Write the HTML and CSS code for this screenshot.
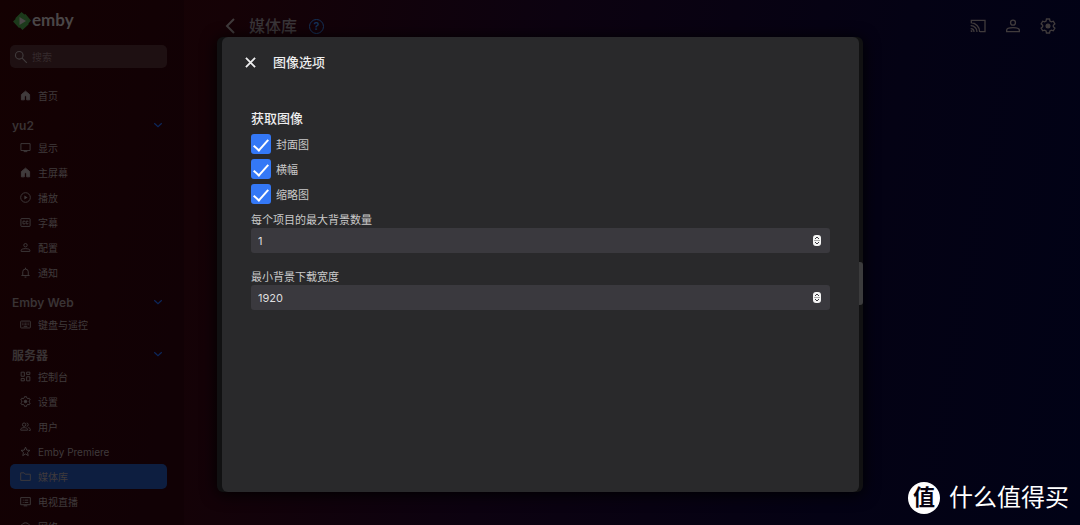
FILE: index.html
```html
<!DOCTYPE html>
<html lang="zh-CN">
<head>
<meta charset="utf-8">
<meta name="viewport" content="width=device-width, initial-scale=1">
<title>Emby</title>
<link rel="stylesheet" href="styles.css">
</head>
<body>
<svg class="defs" aria-hidden="true">
  <symbol id="i-home" viewBox="0 0 24 24"><path fill="currentColor" d="M12 2.500 3 10v11.500h6.500V15a2.500 2.500 0 0 1 5 0v6.500H21V10z"/></symbol>
  <symbol id="i-display" viewBox="0 0 24 24"><path d="M2 3.500h20v15H2zM8 21h8"/></symbol>
  <symbol id="i-play" viewBox="0 0 24 24"><circle cx="12" cy="12" r="10.500"/><path fill="currentColor" stroke="none" d="M9.500 7.500v9l7-4.500z"/></symbol>
  <symbol id="i-cc" viewBox="0 0 24 24"><rect x="2" y="3.500" width="20" height="17" rx="1"/><path d="M11 10.500V9H6.500v6H11v-1.500M17.500 10.500V9h-4v6h4v-1.500"/></symbol>
  <symbol id="i-person" viewBox="0 0 24 24"><circle cx="12" cy="7" r="3.700"/><path d="M2.500 20.500V18c0-2 4-3.500 9.500-3.500s9.500 1.500 9.500 3.500v2.500z"/></symbol>
  <symbol id="i-bell" viewBox="0 0 24 24"><path d="M6 18v-7.500a6 6 0 0 1 12 0V18M3 18.500h18M12 1.500v3M10 22h4"/></symbol>
  <symbol id="i-keyboard" viewBox="0 0 24 24"><rect x="1.500" y="4.500" width="21" height="15" rx="1"/><path d="M5 9h14M5 12.500h14" stroke-dasharray="2 1"/><path d="M8 16h8"/></symbol>
  <symbol id="i-dash" viewBox="0 0 24 24"><path d="M2.500 2.500h7v9h-7zM14.500 2.500h7v5h-7zM14.500 12.500h7v9h-7zM2.500 16.500h7v5h-7z"/></symbol>
  <symbol id="i-gear" viewBox="0 0 24 24"><path d="m9.700 1.500-.6 3-2.200 1.300L4 4.800 1.700 8.700 4 10.800v2.400l-2.300 2.100L4 19.200l2.900-1 2.200 1.300.6 3h4.600l.6-3 2.200-1.300 2.900 1 2.300-3.900-2.300-2.100v-2.400l2.300-2.100L20 4.800l-2.900 1-2.200-1.300-.6-3z"/><circle cx="12" cy="12" r="2.800" fill="currentColor"/></symbol>
  <symbol id="i-users" viewBox="0 0 24 24"><circle cx="9" cy="8" r="3.700"/><path d="M1.500 20v-2c0-2 3.500-3.500 7.500-3.500s7.500 1.500 7.500 3.500v2zM14.500 4.500a3.500 3.500 0 0 1 0 7M18 14.500c2 .6 4.500 1.500 4.500 3.500v2.500H19"/></symbol>
  <symbol id="i-star" viewBox="0 0 24 24"><path d="m12 2.500 2.700 6.500 7 .6-5.300 4.600 1.600 6.800-6-3.600L6 21l1.600-6.800-5.300-4.600 7-.6z"/></symbol>
  <symbol id="i-folder" viewBox="0 0 24 24"><path d="M1.500 4H9l2.500 3h11v13.500h-21z"/></symbol>
  <symbol id="i-tv" viewBox="0 0 24 24"><path d="M1.500 3.500h21V19h-21zM8 21.500h8M6 9h2M10 9h8M6 14h2M10 14h8"/></symbol>
  <symbol id="i-net" viewBox="0 0 24 24"><path d="M2 12c1-5 5.500-8 10-8s9 3 10 8M6 14c3-4 9-4 12 0"/></symbol>
  <symbol id="i-down" viewBox="0 0 24 24"><path d="m3 8 9 8 9-8"/></symbol>
  <symbol id="i-search" viewBox="0 0 24 24"><circle cx="9" cy="9" r="6.500"/><path d="m14 14 8 8"/></symbol>
  <symbol id="i-cast" viewBox="0 0 24 24"><path d="M2 7V3.500h20.500v17H15M1 11.500a9 9 0 0 1 9.500 9.500M1 7A13.500 13.500 0 0 1 14.500 21M1 16a5 5 0 0 1 5 5M1 19.500h1.500V21"/></symbol>
  <symbol id="i-spin" viewBox="0 0 8 11"><rect width="8" height="11" rx="3" fill="#f4f4f4" stroke="none"/><path fill="none" stroke="#3a393e" stroke-width="1" d="m2 4 2-2 2 2M2 7l2 2 2-2"/><path stroke="#aaa" stroke-width="1" d="M1 5.500h6"/></symbol>
</svg>

<div class="app">
  <aside class="sidebar">
    <a class="logo" href="#">
      <svg class="logo-mark" viewBox="0 0 18 18" aria-hidden="true"><path fill="#1c3a1b" d="m8.500 0 3 2.500 1-.5L18 8.500l-2.500 3v1L9.500 18 7 15.500l-1 .5-6-6.500L2.500 7V6z"/><path fill="#4a4747" d="M6.500 5v8l6.500-4z"/></svg>
      <span>emby</span>
    </a>
    <label class="search">
      <svg class="icon search-icon"><use href="#i-search"/></svg>
      <input type="text" placeholder="搜索" aria-label="搜索">
    </label>
    <nav class="nav">
      <a class="item" href="#"><svg class="icon"><use href="#i-home"/></svg>首页</a>
      <button class="group" type="button">yu2<svg class="icon chevron"><use href="#i-down"/></svg></button>
      <a class="item" href="#"><svg class="icon"><use href="#i-display"/></svg>显示</a>
      <a class="item" href="#"><svg class="icon"><use href="#i-home"/></svg>主屏幕</a>
      <a class="item" href="#"><svg class="icon"><use href="#i-play"/></svg>播放</a>
      <a class="item" href="#"><svg class="icon"><use href="#i-cc"/></svg>字幕</a>
      <a class="item" href="#"><svg class="icon"><use href="#i-person"/></svg>配置</a>
      <a class="item" href="#"><svg class="icon"><use href="#i-bell"/></svg>通知</a>
      <button class="group" type="button">Emby Web<svg class="icon chevron"><use href="#i-down"/></svg></button>
      <a class="item" href="#"><svg class="icon"><use href="#i-keyboard"/></svg>键盘与遥控</a>
      <button class="group" type="button">服务器<svg class="icon chevron"><use href="#i-down"/></svg></button>
      <a class="item" href="#"><svg class="icon"><use href="#i-dash"/></svg>控制台</a>
      <a class="item" href="#"><svg class="icon"><use href="#i-gear"/></svg>设置</a>
      <a class="item" href="#"><svg class="icon"><use href="#i-users"/></svg>用户</a>
      <a class="item" href="#"><svg class="icon"><use href="#i-star"/></svg>Emby Premiere</a>
      <a class="item selected" href="#" aria-current="page"><svg class="icon"><use href="#i-folder"/></svg>媒体库</a>
      <a class="item" href="#"><svg class="icon"><use href="#i-tv"/></svg>电视直播</a>
      <a class="item" href="#"><svg class="icon"><use href="#i-net"/></svg>网络</a>
    </nav>
  </aside>
  <header class="header">
    <button class="plain" type="button" aria-label="返回"><svg class="back" viewBox="0 0 10 16"><path d="M9 1 2 8l7 7"/></svg></button>
    <h1>媒体库</h1>
    <a class="help" href="#" aria-label="帮助">?</a>
    <div class="actions">
      <button class="plain" type="button" aria-label="投射"><svg class="icon large"><use href="#i-cast"/></svg></button>
      <button class="plain" type="button" aria-label="用户"><svg class="icon large"><use href="#i-person"/></svg></button>
      <button class="plain" type="button" aria-label="设置"><svg class="icon large"><use href="#i-gear"/></svg></button>
    </div>
  </header>
</div>

<div class="overlay">
  <div class="frame">
    <section class="dialog" role="dialog" aria-labelledby="dialog-title">
      <div class="dialog-head">
        <button class="plain" type="button" aria-label="关闭"><svg class="close" viewBox="0 0 12 12"><path d="m1 1 10 10M11 1 1 11"/></svg></button>
        <h2 id="dialog-title">图像选项</h2>
      </div>
      <form class="form">
        <fieldset>
          <legend>获取图像</legend>
          <label class="check"><input type="checkbox" checked>封面图</label>
          <label class="check"><input type="checkbox" checked>横幅</label>
          <label class="check"><input type="checkbox" checked>缩略图</label>
        </fieldset>
        <div class="field">
          <label for="max-backdrops">每个项目的最大背景数量</label>
          <div class="number"><input id="max-backdrops" type="number" value="1"><svg class="spin" aria-hidden="true"><use href="#i-spin"/></svg></div>
        </div>
        <div class="field">
          <label for="min-width">最小背景下载宽度</label>
          <div class="number"><input id="min-width" type="number" value="1920"><svg class="spin" aria-hidden="true"><use href="#i-spin"/></svg></div>
        </div>
      </form>
    </section>
    <span class="thumb"></span>
  </div>
</div>

<div class="watermark"><span class="seal">值</span><span>什么值得买</span></div>
</body>
</html>
```

FILE: styles.css
```css
* { box-sizing: border-box; }
body {
  margin: 0;
  height: 100vh;
  overflow: hidden;
  position: relative;
  font-family: Inter, "Noto Sans CJK SC", sans-serif;
  font-size: 10px;
  color: #403b3c;
  background: linear-gradient(100deg, #180203 0%, #150206 20%, #0c0210 48%, #040214 78%, #010216 100%);
}
button, input { font: inherit; color: inherit; }
a { color: inherit; text-decoration: none; }
h1, h2 { margin: 0; }
.defs { position: absolute; width: 0; height: 0; }

.icon {
  width: 11px;
  height: 11px;
  flex: none;
  fill: none;
  stroke: currentColor;
  stroke-width: 2;
}
.plain {
  display: flex;
  padding: 0;
  border: 0;
  background: none;
}

.app { display: flex; height: 100%; }
.sidebar {
  flex: none;
  width: 184px;
  padding: 10px 17px 0 10px;
  overflow: hidden;
  background: rgba(0, 0, 0, 0.15);
}
.logo {
  display: flex;
  align-items: center;
  gap: 1px;
  height: 22px;
  padding-left: 3px;
  font: 700 17px/20px Lato, sans-serif;
  color: #4a4647;
}
.logo span { padding-bottom: 3px; }
.logo-mark { width: 18px; height: 18px; }
.search {
  display: flex;
  align-items: center;
  gap: 4px;
  height: 23px;
  margin: 13px 0 15px;
  padding-left: 4px;
  border-radius: 5px;
  background: #1e1012;
}
.search-icon { width: 14px; height: 14px; }
.search input {
  flex: 1;
  min-width: 0;
  padding: 0;
  border: 0;
  background: none;
}
.search input::placeholder { color: #352a2c; }

.item {
  display: flex;
  align-items: center;
  gap: 7px;
  height: 25px;
  padding-left: 10px;
  border-radius: 5px;
}
.selected { background: #0d1e40; }
.group {
  display: flex;
  align-items: center;
  justify-content: space-between;
  width: 100%;
  height: 27px;
  padding: 7px 4px 0 2px;
  border: 0;
  background: none;
  font-size: 12px;
  font-weight: 600;
  color: #393334;
}
.chevron { width: 10px; height: 10px; stroke-width: 3; color: #0d275b; }

.header {
  flex: 1;
  display: flex;
  align-items: center;
  height: 52px;
  padding: 0 24px 0 41px;
}
.header h1 {
  margin: 0 12px 0 14px;
  font-size: 16px;
  line-height: 24px;
  font-weight: 500;
  color: #393538;
}
.back { width: 10px; height: 16px; fill: none; stroke: currentColor; stroke-width: 2; }
.help {
  width: 15px;
  height: 15px;
  border: 1px solid #143259;
  border-radius: 50%;
  font-size: 11px;
  line-height: 13px;
  font-weight: 600;
  text-align: center;
  color: #143259;
}
.actions { display: flex; gap: 19px; margin-left: auto; }
.large { width: 16px; height: 16px; }

.overlay {
  position: absolute;
  inset: 0;
  display: flex;
  justify-content: center;
  padding: 37px 20px 33px;
}
.frame {
  position: relative;
  width: 100%;
  max-width: 646px;
  padding: 0 4px 0 5px;
  border-radius: 6px;
  background: #111112;
  box-shadow: 0 2px 16px #000;
}
.dialog {
  height: 100%;
  overflow: auto;
  border-radius: 6px;
  background: #29292b;
  color: #c9c9ca;
}
.dialog-head {
  display: flex;
  align-items: center;
  gap: 17px;
  height: 50px;
  padding-left: 23px;
  color: #ededee;
}
.close { width: 11px; height: 11px; fill: none; stroke: currentColor; stroke-width: 2; }
.dialog-head h2, legend {
  font-size: 13px;
  line-height: 20px;
  font-weight: 500;
  color: #ededee;
}
.form { padding: 21px 29px 0; font-size: 11px; }
fieldset { margin: 0; padding: 0; border: 0; }
legend { padding: 0; margin-bottom: 3px; }
.check {
  display: flex;
  align-items: center;
  gap: 5px;
  height: 25px;
}
.check input {
  appearance: none;
  display: flex;
  justify-content: center;
  width: 20px;
  height: 20px;
  margin: 0;
  border-radius: 3px;
  background: #3478f6;
}
.check input:checked::before {
  content: "";
  width: 6px;
  height: 13px;
  margin-top: 2px;
  border: solid #fff;
  border-width: 0 2px 2px 0;
  rotate: 42deg;
}
.field { margin-bottom: 10px; }
.field label { display: block; line-height: 16px; padding-top: 6px; }
.number { position: relative; display: flex; }
.number input {
  appearance: textfield;
  width: 100%;
  height: 25px;
  padding: 0 7px;
  border: 0;
  border-radius: 3px;
  background: #3a393e;
  color: #dededf;
}
.number input::-webkit-inner-spin-button { appearance: none; }
.spin { position: absolute; right: 9px; top: 7px; width: 8px; height: 11px; }
.thumb {
  position: absolute;
  right: 0;
  top: 225px;
  width: 4px;
  height: 43px;
  border-radius: 0 3px 3px 0;
  background: #3b3b3c;
}

.watermark {
  position: absolute;
  right: 11px;
  bottom: 9px;
  display: flex;
  align-items: center;
  gap: 9px;
  color: #fff;
  font-size: 24px;
  line-height: 36px;
}
.seal {
  width: 32px;
  height: 32px;
  border-radius: 50%;
  background: #fff;
  color: #050210;
  font-size: 22px;
  line-height: 31px;
  font-style: oblique 8deg;
  font-weight: 700;
  text-align: center;
}
```
